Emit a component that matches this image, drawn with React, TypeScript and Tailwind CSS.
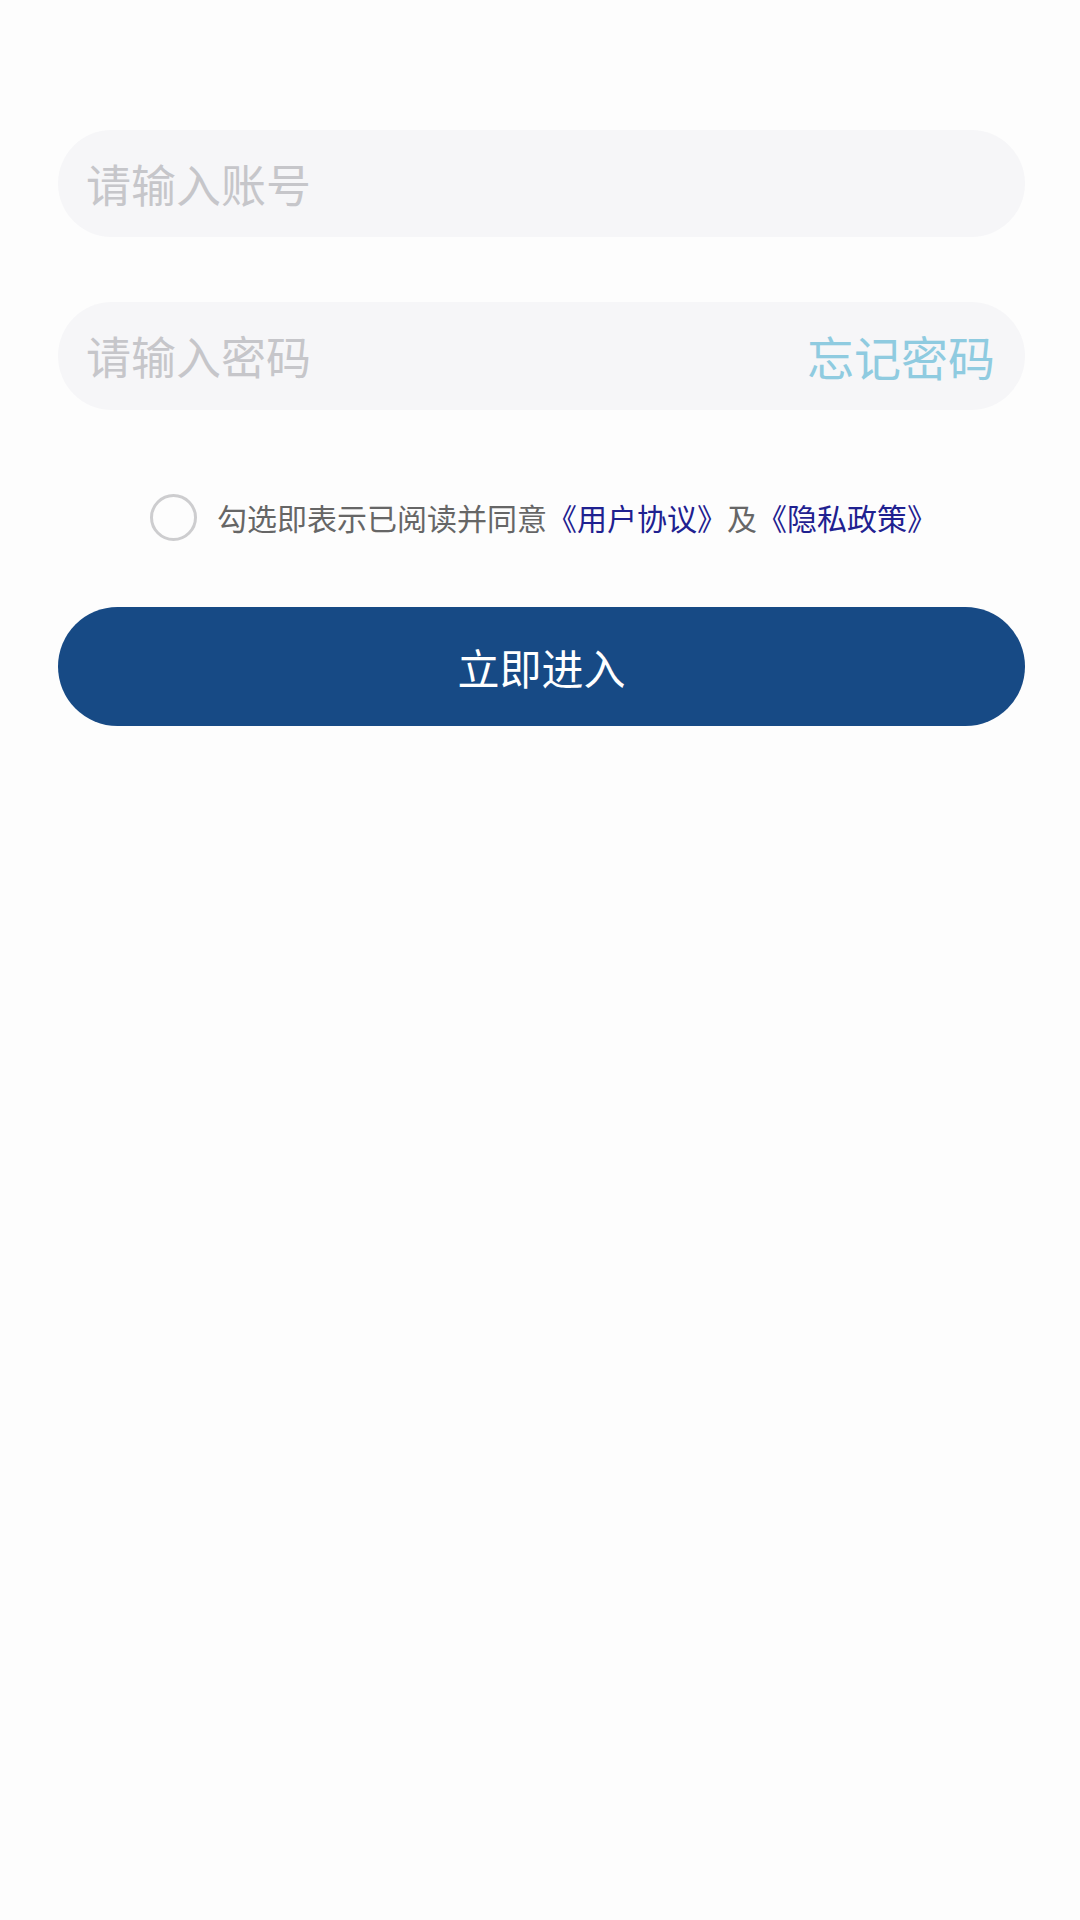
import { useState } from "react";

const font = { fontFamily: '"Noto Sans CJK SC", "Noto Sans", sans-serif' };

const App = () => {
  const [agreed, setAgreed] = useState(false);

  return (
    <div className="min-h-[1920px] w-[1080px] bg-[#fdfdfd] pl-[58px] pr-[55px] pt-[130px]" style={font}>
      <div className="flex h-[107px] items-center rounded-full bg-[#f6f6f8] pl-[28px] pr-[30px]">
        <input
          placeholder="请输入账号"
          className="w-full bg-transparent text-[45px] text-[#333] outline-none placeholder:text-[#c6c6ca]"
        />
      </div>

      <div className="mt-[65px] flex h-[108px] items-center rounded-full bg-[#f6f6f8] pl-[28px] pr-[30px]">
        <input
          type="password"
          placeholder="请输入密码"
          className="min-w-0 flex-1 bg-transparent text-[45px] text-[#333] outline-none placeholder:text-[#c6c6ca]"
        />
        <button className="shrink-0 text-[47px] text-[#8fcbe0]">忘记密码</button>
      </div>

      <div className="mt-[83px] flex items-center justify-center gap-[20px] pl-[4px]">
        <button
          onClick={() => setAgreed(!agreed)}
          className={`h-[47px] w-[47px] shrink-0 rounded-full border-[3px] ${agreed ? "border-[#174a85] bg-[#174a85]" : "border-[#cdcdcf]"}`}
        />
        <p className="text-[30px] leading-[48px] text-[#666]">
          勾选即表示已阅读并同意<span className="text-[#1f2190]">《用户协议》</span>及<span className="text-[#1f2190]">《隐私政策》</span>
        </p>
      </div>

      <button className="mt-[66px] flex h-[119px] w-full items-center justify-center rounded-full bg-[#174a85] text-[42px] text-white">
        立即进入
      </button>
    </div>
  );
};

export default App;
